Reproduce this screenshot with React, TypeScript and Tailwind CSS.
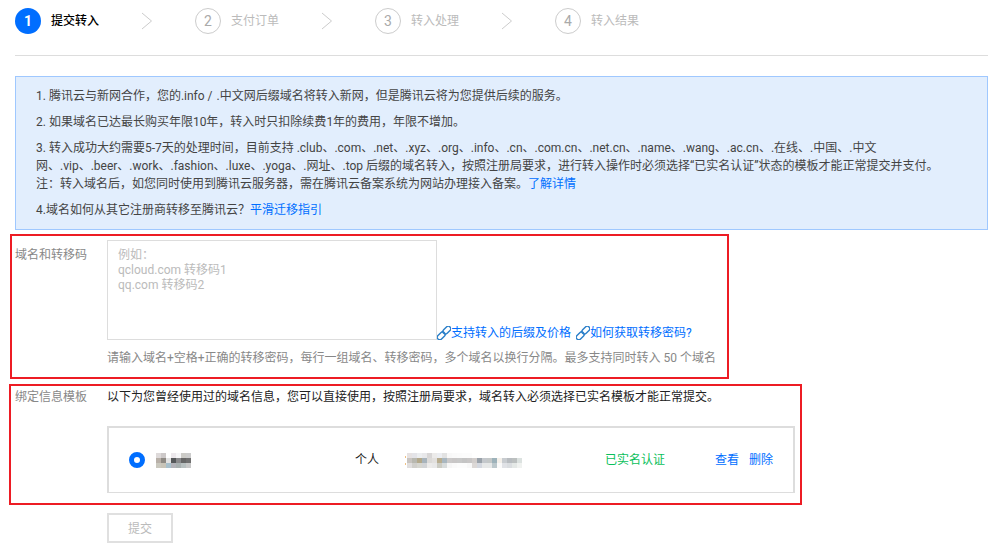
const steps = [
  { n: "1", t: "提交转入", active: true },
  { n: "2", t: "支付订单" },
  { n: "3", t: "转入处理" },
  { n: "4", t: "转入结果" },
];

function Mosaic({ cells, size, w, h, dots }: { cells: string[][]; size: number; w: number; h: number; dots?: boolean }) {
  return (
    <svg width={w} height={h} viewBox={`0 0 ${w} ${h}`} className="block shrink-0" shapeRendering="crispEdges">
      {cells.map((row, y) =>
        row.map((c, x) => <rect key={`${x}-${y}`} x={x * size + (dots ? 2 : 0)} y={y * size} width={size} height={size} fill={c} />)
      )}
      {dots && <rect x="0" y="3" width="1" height="2" fill="#f0c080" />}
      {dots && <rect x="0" y="10" width="1" height="2" fill="#f0c080" />}
    </svg>
  );
}

function ChainIcon({ className }: { className?: string }) {
  return (
    <svg width="14" height="14" viewBox="0 0 14 14" fill="none" stroke="#2a7fc9" strokeWidth="1.4" className={className}>
      <g transform="rotate(-45 7 7)">
        <rect x="-1.5" y="4.5" width="9" height="5" rx="2.5" />
        <rect x="6.5" y="4.5" width="9" height="5" rx="2.5" />
      </g>
    </svg>
  );
}

const nameCells = [
  ["#dedada", "#cdc9c9", "#ffffff", "#ece8ec", "#f6f6f8", "#cccbc7", "#cccccc"],
  ["#b8b0a8", "#8e8a84", "#e2e2e2", "#55585a", "#8a8a8c", "#666666", "#707070"],
  ["#cac8be", "#c8c4b8", "#a8c0cc", "#b2b2b8", "#a8b0b0", "#b8c0c0", "#c8c8c8"],
];

const mailCells = [
  ["#e6e2e2", "#e4e4e8", "#eceef0", "#e8e8ea", "#d8d6d6", "#ecebea", "#eceef2", "#e2e2e2", "#f8f8f8", "#fafafa", "#fbfbfb", "#fcfcfc", "#fcfcfc", "#ffffff", "#ffffff", "#ffffff", "#ffffff", "#ffffff", "#ffffff", "#ffffff", "#ffffff", "#ffffff", "#ffffff"],
  ["#c8c4c0", "#b8b8b0", "#b3a98c", "#a8b4bc", "#dcdad8", "#e2e0de", "#b8ad90", "#a9b7c0", "#cbc9c9", "#c8c6c6", "#c8c8c8", "#c4c4c4", "#c8c6c6", "#d2cecc", "#9aa2aa", "#c4c8cc", "#c4c8c8", "#9db2ba", "#f4f0ea", "#c8ccd0", "#b8bcc0", "#bcc0c0", "#dce2e0"],
  ["#e0dede", "#d0cfcb", "#d6d6d0", "#d2d4d6", "#ecebea", "#e8e8e8", "#ccccc4", "#d8dcdc", "#f6f6f6", "#fafafa", "#fcfcfc", "#fcfcfc", "#f8f8f8", "#dcd8d6", "#d4d8e0", "#e6e8e8", "#e6e8e8", "#bcc8cc", "#fafafa", "#e0e2e6", "#dadde0", "#e4e8e6", "#f0f2f0"],
];

export default function App() {
  return (
    <div className="relative h-[547px] w-[996px] overflow-hidden bg-white pl-[15px] pr-2 text-xs leading-[18px] text-[#444] [font-family:Roboto,'Noto_Sans_CJK_SC','Noto_Sans',sans-serif]">
      <div className="flex h-14 items-start border-b border-[#ddd] pt-2">
        {steps.map((s, i) => (
          <div key={s.n} className="flex w-[180px] items-center">
            <span
              className={
                s.active
                  ? "flex h-[26px] w-[26px] items-center justify-center rounded-full bg-[#006eff] text-sm font-bold text-white"
                  : "flex h-[26px] w-[26px] items-center justify-center rounded-full border border-[#ccc] text-sm text-[#aaa]"
              }
            >
              {s.n}
            </span>
            <span className={s.active ? "ml-[10px] w-12 font-medium text-black" : "ml-[10px] w-12 text-[#bbb]"}>{s.t}</span>
            {i < 3 && (
              <svg width="12" height="18" viewBox="0 0 12 18" fill="none" className="ml-[42px]">
                <path d="M1 1 L10.5 9 L1 17" stroke="#ccc" strokeWidth="1" />
              </svg>
            )}
          </div>
        ))}
      </div>

      <div className="mt-5 flex flex-col gap-2 border border-[#9fc8ff] bg-[#e2eefd] px-5 pb-[10px] pt-[10px]">
        <p>
          1. 腾讯云与新网合作，您的.info / <span className="ml-[1px]">.中文网后缀域名将转入新网，但是腾讯云将为您提供后续的服务。</span>
        </p>
        <p>2. 如果域名已达最长购买年限10年，转入时只扣除续费1年的费用，年限不增加。</p>
        <p>
          3. 转入成功大约需要5-7天的处理时间，目前支持 .club、.com、.net、.xyz、.org、.info、.cn、.com.cn、.net.cn、.name、.wang、.ac.cn、.在线、.中国、.中文
          <br />
          网、.vip、.beer、.work、.fashion、.luxe、.yoga、.网址、.top 后缀的域名转入，按照注册局要求，进行转入操作时必须选择“已实名认证”状态的模板才能正常提交并支付。
          <br />
          注：转入域名后，如您同时使用到腾讯云服务器，需在腾讯云备案系统为网站办理接入备案。<span className="text-[#006eff]">了解详情</span>
        </p>
        <p>
          4.域名如何从其它注册商转移至腾讯云？<span className="text-[#006eff]">平滑迁移指引</span>
        </p>
      </div>

      <div className="mt-[10px] flex">
        <div className="w-[92px] shrink-0 pt-[6px] text-[#888]">域名和转移码</div>
        <div>
          <div className="flex items-end">
            <div className="h-[100px] w-[330px] border border-[#ddd] px-[10px] pb-[6px] pt-[7px] leading-[15px] text-[#bbb]">
              <div>例如：</div>
              <div>qcloud.com 转移码1</div>
              <div>qq.com 转移码2</div>
            </div>
            <div className="flex items-end leading-[14px] text-[#006eff]">
              <ChainIcon />
              <span>支持转入的后缀及价格</span>
              <ChainIcon className="ml-[5px]" />
              <span>如何获取转移密码?</span>
            </div>
          </div>
          <div className="mt-[9px] text-[#888]">请输入域名+空格+正确的转移密码，每行一组域名、转移密码，多个域名以换行分隔。最多支持同时转入 50 个域名</div>
        </div>
      </div>

      <div className="mt-[21px] flex">
        <div className="w-[92px] shrink-0 text-[#888]">绑定信息模板</div>
        <div>
          <div className="text-[#222]">以下为您曾经使用过的域名信息，您可以直接使用，按照注册局要求，域名转入必须选择已实名模板才能正常提交。</div>
          <div className="mt-5 flex h-[67px] w-[688px] items-center border-2 border-b border-[#ddd] pl-5">
            <span className="h-4 w-4 shrink-0 rounded-full border-[5px] border-[#006eff] bg-white" />
            <span className="ml-[11px]">
              <Mosaic cells={nameCells} size={5} w={35} h={15} />
            </span>
            <span className="ml-[164px] w-[50px] text-[#222]">个人</span>
            <Mosaic cells={mailCells} size={5} w={117} h={15} dots />
            <span className="ml-[83px] w-[110px] text-[#0abf5b]">已实名认证</span>
            <span className="text-[#006eff]">查看</span>
            <span className="ml-[10px] text-[#006eff]">删除</span>
          </div>
          <div className="mt-5 flex h-[30px] w-[66px] items-center justify-center border-2 border-[#e0e0e0] pt-[1px] text-[#bbb]">提交</div>
        </div>
      </div>

      <div className="absolute left-[10px] top-[234px] h-[145px] w-[719px] border-2 border-[#ed1c24]" />
      <div className="absolute left-[9px] top-[384px] h-[121px] w-[793px] border-2 border-[#ed1c24]" />
    </div>
  );
}
